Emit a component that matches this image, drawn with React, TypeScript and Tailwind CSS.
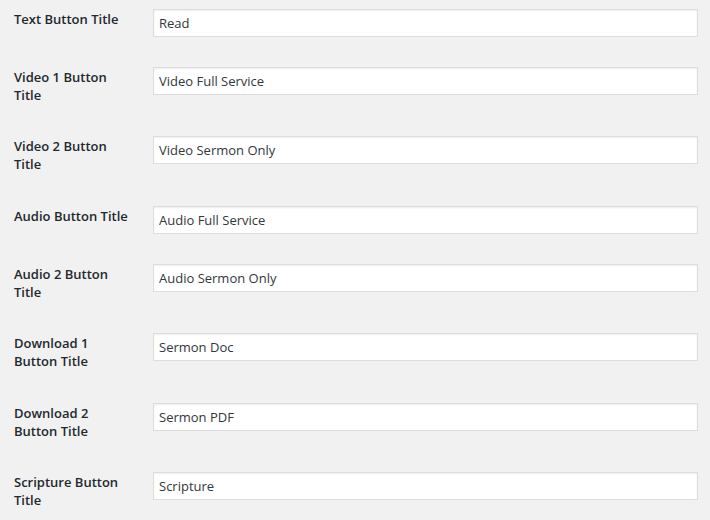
const fields = [
  { label: "Text Button Title", value: "Read", h: "h-[58px]" },
  { label: "Video 1 Button Title", value: "Video Full Service", h: "h-[69px]" },
  { label: "Video 2 Button Title", value: "Video Sermon Only", h: "h-[70px]" },
  { label: "Audio Button Title", value: "Audio Full Service", h: "h-[58px]" },
  { label: "Audio 2 Button Title", value: "Audio Sermon Only", h: "h-[69px]" },
  { label: "Download 1 Button Title", value: "Sermon Doc", h: "h-[70px]" },
  { label: "Download 2 Button Title", value: "Sermon PDF", h: "h-[69px]" },
  { label: "Scripture Button Title", value: "Scripture", h: "h-[60px]" },
];

export default function App() {
  return (
    <div className="w-[710px] h-[520px] overflow-hidden bg-[#f1f1f1] pt-[9px] font-['Open_Sans','Noto_Sans',sans-serif]">
      {fields.map((f) => (
        <div key={f.label} className={`flex items-start ${f.h}`}>
          <label className="ml-[14px] mr-[21px] w-[118px] pt-[1px] text-[13px] leading-[18px] font-semibold text-[#23282d]">
            {f.label}
          </label>
          <input
            type="text"
            defaultValue={f.value}
            className="h-[28px] w-[545px] border border-[#ddd] bg-white px-[5px] text-[13px] text-[#32373c] shadow-[inset_0_1px_2px_rgba(0,0,0,0.07)] outline-none"
          />
        </div>
      ))}
    </div>
  );
}
